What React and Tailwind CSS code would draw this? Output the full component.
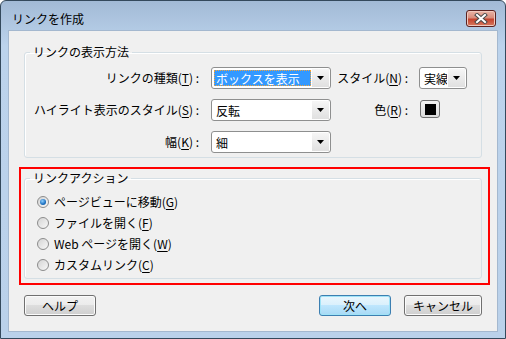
import React from 'react';

// mnemonic like (T) with the letter underlined
const Key = ({ k }) => (
  <>
    (<span className="underline underline-offset-[2px]">{k}</span>)
  </>
);

const Arrow = () => (
  <svg width="7" height="4" viewBox="0 0 7 4">
    <path d="M0 0h7L3.5 4z" fill="#000" />
  </svg>
);

const Combo = ({ className, text, selected }) => (
  <div className={`flex h-[22px] rounded-[3px] border border-[#8e8f8f] bg-white p-[1px] ${className}`}>
    <div className="flex-1 min-w-0 p-[1px]">
      {selected ? (
        <div className="h-full border border-dotted border-[#f2a33a] bg-[#3399ff] pl-[1px] text-white leading-[16px] whitespace-nowrap overflow-hidden">
          {text}
        </div>
      ) : (
        <div className="h-full pl-[2px] leading-[18px] whitespace-nowrap overflow-hidden">{text}</div>
      )}
    </div>
    <div className="w-[17px] flex items-center justify-center bg-[linear-gradient(to_bottom,#f6f6f6,#e0e0e0)]">
      <Arrow />
    </div>
  </div>
);

const Radio = ({ checked, children }) => (
  <div className="flex h-[21px] items-center">
    <div className="flex h-[12px] w-[12px] items-center justify-center rounded-full border border-[#8c8c8c] bg-[linear-gradient(135deg,#d4d4d4,#f8f8f8)]">
      {checked && (
        <div className="h-[6px] w-[6px] rounded-full bg-[radial-gradient(circle_at_40%_35%,#8fd0ff,#1b6fc0_60%,#0b4a8a)]" />
      )}
    </div>
    <span className="ml-[5px] leading-[16px]">{children}</span>
  </div>
);

const Button = ({ children, primary, className }) => (
  <div
    className={`flex h-[21px] items-center justify-center rounded-[3px] border leading-[16px] ${
      primary
        ? 'border-[#3c7fb1] bg-[linear-gradient(to_bottom,#eaf6fd_0%,#d9f0fc_50%,#bee6fd_50%,#a7d9f5_100%)] shadow-[inset_0_0_0_1px_#9fe3f7]'
        : 'border-[#707070] bg-[linear-gradient(to_bottom,#f2f2f2_0%,#ebebeb_50%,#dddddd_50%,#cfcfcf_100%)] shadow-[inset_0_0_0_1px_#fbfbfb]'
    } ${className}`}
  >
    {children}
  </div>
);

export default function App() {
  return (
    <div className="w-[506px] h-[339px] font-['Noto_Sans_CJK_JP','Noto_Sans',sans-serif] text-[12px] text-black">
      <div className="flex h-full flex-col rounded-t-[6px] border border-[#34495c] bg-[linear-gradient(to_bottom,#a2bad6,#bcd3ec_45px,#bad1ea)] px-[7px] pb-[6px]">
        {/* title bar */}
        <div className="flex h-[29px] items-start justify-between">
          <div className="pl-[4px] pt-[10px] leading-[16px]">リンクを作成</div>
          <div className="mt-[9px] mr-[2px] flex h-[17px] w-[30px] items-center justify-center rounded-[3px] border border-[#5b2220] bg-[linear-gradient(to_bottom,#eab4a6_0%,#d88d7c_45%,#c4432e_55%,#d77a60_100%)] shadow-[inset_0_0_0_1px_#f0c8bd]">
            <svg width="14" height="11" viewBox="0 0 14 11">
              <path d="M3 2l8 7M11 2l-8 7" stroke="#4a4a4a" strokeWidth="4" strokeLinecap="square" />
              <path d="M3 2l8 7M11 2l-8 7" stroke="#fff" strokeWidth="2" strokeLinecap="square" />
            </svg>
          </div>
        </div>

        {/* client area */}
        <div className="relative flex-1 border border-[#a4b8cf] bg-[#f0f0f0]">
          <fieldset className="mx-[15px] mt-[13px] rounded-[3px] border border-[#d5dfe5] px-0 pt-[7px] pb-[4px] shadow-[inset_1px_1px_0_#fff]">
            <legend className="ml-[5px] px-[3px] leading-[16px]">リンクの表示方法</legend>
            <div className="flex flex-col gap-[10px]">
              <div className="flex h-[22px] items-center">
                <div className="w-[174px] text-right leading-[16px]">
                  リンクの種類<Key k="T" /> :
                </div>
                <Combo className="ml-[12px] w-[120px]" text="ボックスを表示" selected />
                <div className="w-[77px] text-right leading-[16px]">
                  スタイル<Key k="N" /> :
                </div>
                <Combo className="ml-[11px] w-[48px]" text="実線" />
              </div>
              <div className="flex h-[22px] items-center">
                <div className="w-[174px] text-right leading-[16px]">
                  ハイライト表示のスタイル<Key k="S" /> :
                </div>
                <Combo className="ml-[12px] w-[120px]" text="反転" />
                <div className="w-[77px] text-right leading-[16px]">
                  色<Key k="R" /> :
                </div>
                <div className="ml-[12px] flex h-[18px] w-[20px] items-center justify-center self-start mt-[1px] rounded-[3px] border border-[#707070] bg-[linear-gradient(to_bottom,#f4f4f4,#dcdcdc)]">
                  <div className="h-[11px] w-[11px] bg-black" />
                </div>
              </div>
              <div className="flex h-[22px] items-center">
                <div className="w-[174px] text-right leading-[16px]">
                  幅<Key k="K" /> :
                </div>
                <Combo className="ml-[12px] w-[120px]" text="細" />
              </div>
            </div>
          </fieldset>

          <fieldset className="mx-[15px] mt-[12px] rounded-[3px] border border-[#d5dfe5] pl-[12px] pt-[5px] pb-[3px] shadow-[inset_1px_1px_0_#fff]">
            <legend className="-ml-[7px] px-[3px] leading-[16px]">リンクアクション</legend>
            <Radio checked>
              ページビューに移動<Key k="G" />
            </Radio>
            <Radio>
              ファイルを開く<Key k="F" />
            </Radio>
            <Radio>
              Web ページを開く<Key k="W" />
            </Radio>
            <Radio>
              カスタムリンク<Key k="C" />
            </Radio>
          </fieldset>

          <div className="mx-[15px] mt-[16px] flex">
            <Button className="w-[72px]">ヘルプ</Button>
            <div className="flex-1" />
            <Button primary className="w-[72px]">次へ</Button>
            <Button className="ml-[13px] w-[78px]">キャンセル</Button>
          </div>

          {/* red annotation frame */}
          <div className="pointer-events-none absolute left-[10px] top-[136px] h-[118px] w-[471px] border-2 border-[#ff0000]" />
        </div>
      </div>
    </div>
  );
}
